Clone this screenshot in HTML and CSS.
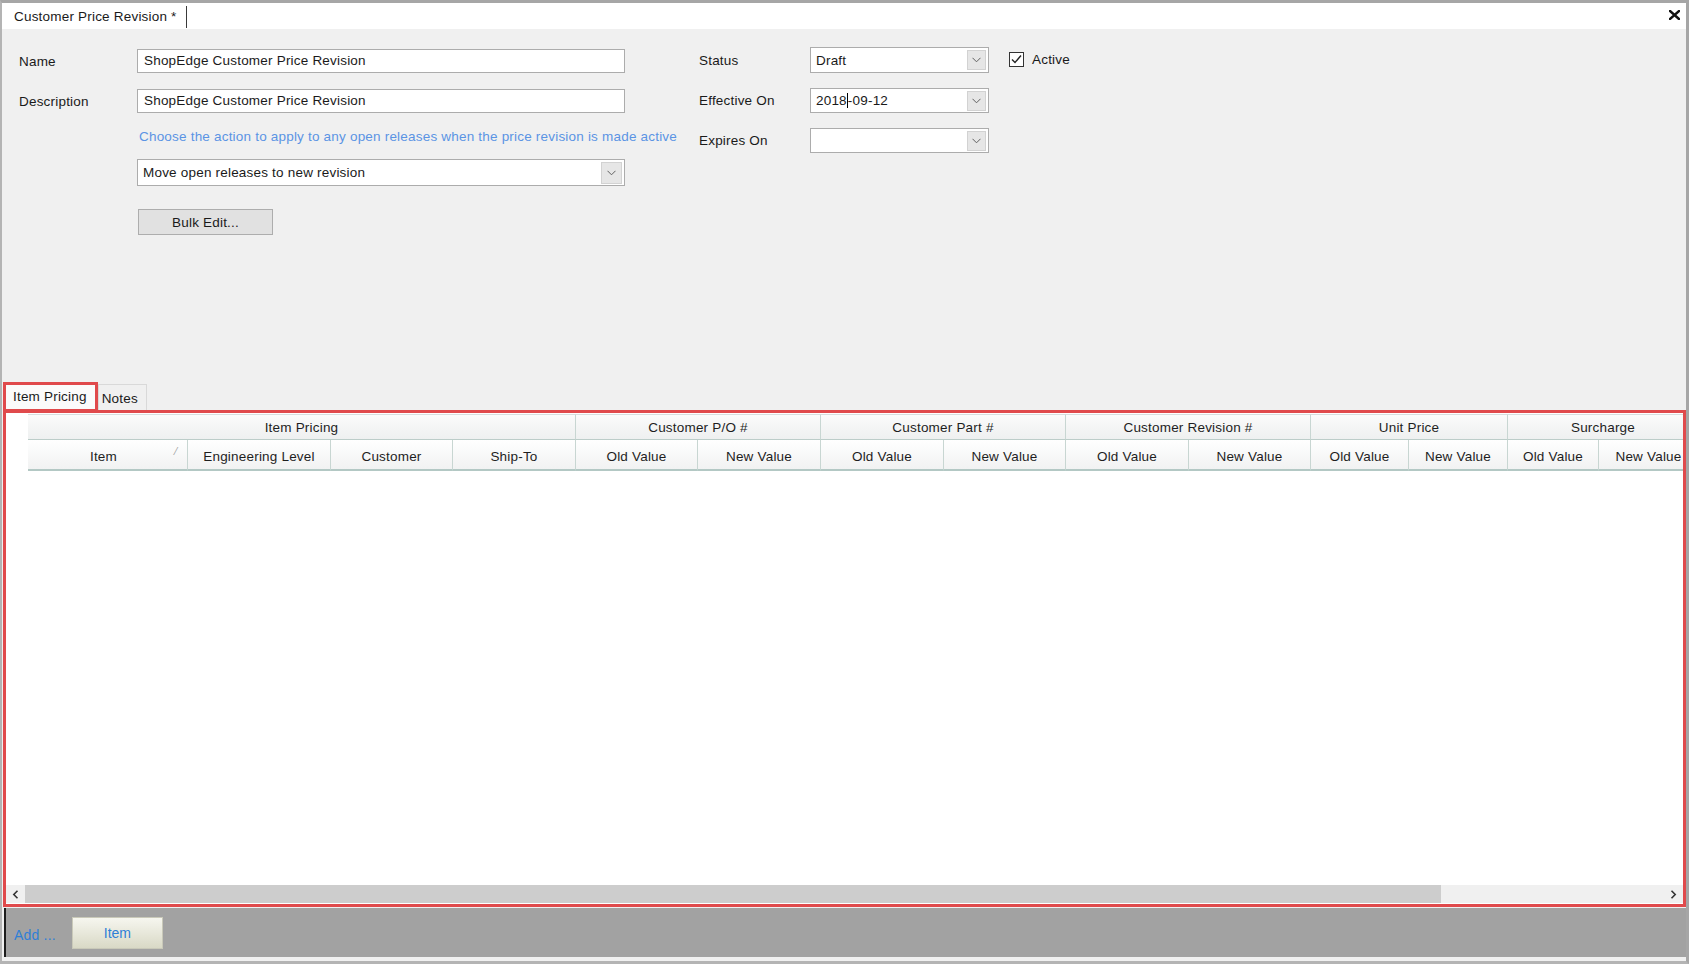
FILE: index.html
```html
<!DOCTYPE html>
<html>
<head>
<meta charset="utf-8">
<title>Customer Price Revision</title>
<link rel="stylesheet" href="styles.css">
</head>
<body>
<div class="window">
  <div class="doc-tabs">
    <div class="doc-tab">Customer Price Revision *</div>
    <div class="close-btn">
      <svg width="11" height="10" viewBox="0 0 11 10"><path d="M1 1 L10 9 M10 1 L1 9" stroke="#111" stroke-width="2.4" stroke-linecap="square"/></svg>
    </div>
  </div>

  <div class="form">
    <div class="form-left">
      <div class="field-row">
        <label class="lbl">Name</label>
        <div class="textbox">ShopEdge Customer Price Revision</div>
      </div>
      <div class="field-row gap16">
        <label class="lbl">Description</label>
        <div class="textbox">ShopEdge Customer Price Revision</div>
      </div>
      <div class="hint">Choose the action to apply to any open releases when the price revision is made active</div>
      <div class="combo wide">
        <span class="combo-text">Move open releases to new revision</span>
        <span class="drop-btn"><svg width="9" height="6" viewBox="0 0 9 6"><path d="M0.5 0.8 L4.5 4.8 L8.5 0.8" fill="none" stroke="#606060" stroke-width="1"/></svg></span>
      </div>
      <button class="bulk-btn">Bulk Edit...</button>
    </div>

    <div class="form-right">
      <div class="field-row r1">
        <label class="lbl-r">Status</label>
        <div class="combo short">
          <span class="combo-text">Draft</span>
          <span class="drop-btn"><svg width="9" height="6" viewBox="0 0 9 6"><path d="M0.5 0.8 L4.5 4.8 L8.5 0.8" fill="none" stroke="#606060" stroke-width="1"/></svg></span>
        </div>
        <div class="check">
          <span class="check-box"><svg width="13" height="13" viewBox="0 0 13 13"><path d="M2 6.5 L5 9.5 L11 2.5" fill="none" stroke="#222" stroke-width="1.4"/></svg></span>
          <span class="check-label">Active</span>
        </div>
      </div>
      <div class="field-row r2">
        <label class="lbl-r">Effective On</label>
        <div class="combo short">
          <span class="combo-text">2018<span class="caret"></span>-09-12</span>
          <span class="drop-btn"><svg width="9" height="6" viewBox="0 0 9 6"><path d="M0.5 0.8 L4.5 4.8 L8.5 0.8" fill="none" stroke="#606060" stroke-width="1"/></svg></span>
        </div>
      </div>
      <div class="field-row r3">
        <label class="lbl-r">Expires On</label>
        <div class="combo short">
          <span class="combo-text"></span>
          <span class="drop-btn"><svg width="9" height="6" viewBox="0 0 9 6"><path d="M0.5 0.8 L4.5 4.8 L8.5 0.8" fill="none" stroke="#606060" stroke-width="1"/></svg></span>
        </div>
      </div>
    </div>
  </div>

  <div class="tabs">
    <div class="tab active">Item Pricing</div>
    <div class="tab">Notes</div>
  </div>

  <div class="grid-panel">
    <div class="grid-header">
      <div class="hcell g span2x4">Item Pricing</div>
      <div class="hcell g span2">Customer P/O #</div>
      <div class="hcell g span2">Customer Part #</div>
      <div class="hcell g span2">Customer Revision #</div>
      <div class="hcell g span2">Unit Price</div>
      <div class="hcell g span2">Surcharge</div>

      <div class="hcell c sort">Item<span class="sort-mark">⁄</span></div>
      <div class="hcell c">Engineering Level</div>
      <div class="hcell c">Customer</div>
      <div class="hcell c">Ship-To</div>
      <div class="hcell c">Old Value</div>
      <div class="hcell c">New Value</div>
      <div class="hcell c">Old Value</div>
      <div class="hcell c">New Value</div>
      <div class="hcell c">Old Value</div>
      <div class="hcell c">New Value</div>
      <div class="hcell c">Old Value</div>
      <div class="hcell c">New Value</div>
      <div class="hcell c">Old Value</div>
      <div class="hcell c">New Value</div>
    </div>
    <div class="grid-body"></div>
    <div class="hscroll">
      <span class="sb-btn"><svg width="7" height="9" viewBox="0 0 7 9"><path d="M5.5 0.8 L1.8 4.5 L5.5 8.2" fill="none" stroke="#333" stroke-width="1.6"/></svg></span>
      <span class="sb-thumb"></span>
      <span class="sb-track"></span>
      <span class="sb-btn"><svg width="7" height="9" viewBox="0 0 7 9"><path d="M1.5 0.8 L5.2 4.5 L1.5 8.2" fill="none" stroke="#333" stroke-width="1.6"/></svg></span>
    </div>
  </div>

  <div class="bottom-bar">
    <span class="add-label">Add ...</span>
    <button class="item-btn">Item</button>
  </div>
  <div class="bottom-strip"></div>
</div>
</body>
</html>
```

FILE: styles.css
```css
html, body {
  margin: 0;
  padding: 0;
  background: #f0f0f0;
}

body {
  font-family: "Liberation Sans", Arial, sans-serif;
  font-size: 13.5px;
  letter-spacing: 0.2px;
  color: #1a1a1a;
}

.window {
  width: 1689px;
  height: 964px;
  box-sizing: border-box;
  border-top: 3px solid #a6a6a6;
  border-left: 2px solid #b4b4b4;
  border-right: 3px solid #a6a6a6;
  border-bottom: 3px solid #b4b4b4;
  display: flex;
  flex-direction: column;
  background: #f0f0f0;
  overflow: hidden;
}

/* document tab strip */
.doc-tabs {
  height: 26px;
  flex: none;
  background: #ffffff;
  display: flex;
  justify-content: space-between;
  align-items: center;
}

.doc-tab {
  height: 22px;
  line-height: 22px;
  padding: 0 9px 0 12px;
  margin-top: 2px;
  border-right: 1px solid #3a3a3a;
  color: #1a1a1a;
}

.close-btn {
  width: 11px;
  height: 10px;
  margin-right: 6px;
  margin-top: -2px;
}

.close-btn svg { display: block; }

/* form */
.form {
  height: 353px;
  flex: none;
  box-sizing: border-box;
  padding: 18px 0 0 17px;
  display: flex;
  background: #f0f0f0;
}

.form-left {
  width: 606px;
  padding-top: 2px;
  display: flex;
  flex-direction: column;
  align-items: flex-start;
}

.field-row {
  display: flex;
  align-items: center;
}

.gap16 { margin-top: 16px; }

.lbl {
  width: 118px;
  flex: none;
}

.textbox {
  width: 488px;
  height: 24px;
  box-sizing: border-box;
  border: 1px solid #acacac;
  background: #ffffff;
  padding-left: 6px;
  line-height: 22px;
  white-space: nowrap;
}

.hint {
  margin: 16px 0 0 120px;
  line-height: 16px;
  color: #5b94e4;
  white-space: nowrap;
}

.combo {
  height: 25px;
  box-sizing: border-box;
  border: 1px solid #acacac;
  background: #ffffff;
  display: flex;
  align-items: center;
  justify-content: space-between;
}

.combo.wide {
  width: 488px;
  height: 27px;
  margin: 14px 0 0 118px;
}

.combo.short {
  width: 179px;
}

.combo-text {
  padding-left: 5px;
  white-space: nowrap;
}

.drop-btn {
  width: 19px;
  height: 20px;
  margin-right: 2px;
  box-sizing: border-box;
  background: #e6e6e6;
  border: 1px solid #d2d2d2;
  display: flex;
  align-items: center;
  justify-content: center;
}

.combo.wide .drop-btn { height: 22px; width: 21px; }

.caret {
  display: inline-block;
  width: 1px;
  height: 15px;
  background: #000;
  vertical-align: -3px;
}

.bulk-btn {
  margin: 23px 0 0 119px;
  width: 135px;
  height: 26px;
  border: 1px solid #adadad;
  background: #e1e1e1;
  font-family: inherit;
  font-size: inherit;
  letter-spacing: inherit;
  color: #1a1a1a;
  padding: 0;
}

.form-right {
  margin-left: 74px;
  display: flex;
  flex-direction: column;
}

.lbl-r {
  width: 111px;
  flex: none;
}

.r1 .combo { height: 26px; }
.r2 { margin-top: 15px; }
.r3 { margin-top: 15px; }

.check {
  display: flex;
  align-items: center;
  margin-left: 20px;
  margin-top: -1px;
}

.check-box {
  width: 15px;
  height: 15px;
  box-sizing: border-box;
  border: 1px solid #333333;
  background: #ffffff;
  display: flex;
  align-items: center;
  justify-content: center;
}

.check-box svg { display: block; }

.check-label {
  margin-left: 8px;
}

/* inner tabs */
.tabs {
  height: 28px;
  flex: none;
  display: flex;
  align-items: flex-end;
  padding-left: 1px;
  position: relative;
  z-index: 2;
}

.tab {
  box-sizing: border-box;
  border: 1px solid #d9d9d9;
  border-bottom: none;
  background: #f0f0f0;
  color: #1a1a1a;
  height: 26px;
  line-height: 28px;
  padding: 0 8px 0 3px;
}

.tab.active {
  height: 30px;
  line-height: 24px;
  margin-bottom: -2px;
  padding: 0 8px 0 7px;
  background: #fbfbfb;
  border: 3px solid #e04a4c;
}

/* grid */
.grid-panel {
  height: 497px;
  flex: none;
  box-sizing: border-box;
  margin-left: 1px;
  border: 3px solid #e04a4c;
  background: #ffffff;
  display: flex;
  flex-direction: column;
  overflow: hidden;
}

.grid-header {
  margin-top: 1px;
  margin-left: 22px;
  display: grid;
  grid-template-columns: 160px 143px 122px 123px 122px 123px 123px 122px 123px 122px 98px 99px 91px 100px;
  grid-template-rows: 26px 31px;
  width: 1768px;
}

.span2x4 { grid-column: span 4; }
.span2 { grid-column: span 2; }

.hcell {
  box-sizing: border-box;
  border-right: 1px solid #c8d6d2;
  border-bottom: 1px solid #bccdc9;
  background: linear-gradient(#ffffff, #f1f2f2);
  display: flex;
  align-items: center;
  justify-content: center;
  white-space: nowrap;
  color: #1e1e1e;
}

.hcell.g {
  border-top: 1px solid #d8dede;
  background: linear-gradient(#fbfbfb, #eef0f0);
  padding-top: 1px;
}

.hcell.c {
  border-bottom: 2px solid #b3c8c4;
  padding-top: 3px;
}

.hcell.sort {
  position: relative;
  padding-right: 8px;
}

.sort-mark {
  position: absolute;
  right: 10px;
  top: 6px;
  font-size: 10px;
  color: #9a9a9a;
}

.grid-body {
  flex: 1;
  background: #ffffff;
}

.hscroll {
  height: 18px;
  margin-bottom: 1px;
  flex: none;
  display: flex;
  background: #f0f0f0;
}

.sb-btn {
  width: 19px;
  flex: none;
  display: flex;
  align-items: center;
  justify-content: center;
  background: #f0f0f0;
}

.sb-thumb {
  width: 1416px;
  flex: none;
  background: #cdcdcd;
}

.sb-track {
  flex: 1;
  background: #f0f0f0;
}

/* bottom bar */
.bottom-bar {
  height: 49px;
  flex: none;
  margin-top: 1px;
  margin-left: 2px;
  box-sizing: border-box;
  border-left: 2px solid #1c1c1c;
  background: #a2a2a2;
  display: flex;
  align-items: center;
}

.add-label {
  margin-left: 8px;
  margin-top: 5px;
  color: #2f7fd6;
  font-size: 14px;
}

.item-btn {
  margin-left: 16px;
  width: 91px;
  height: 32px;
  border: 1px solid #c9c9b9;
  background: linear-gradient(#f6f6ef, #d9d9c6);
  color: #2f7fd6;
  font-family: inherit;
  font-size: 14px;
  padding: 0;
}

.bottom-strip {
  flex: 1;
  background: #f0f0f0;
}
```
